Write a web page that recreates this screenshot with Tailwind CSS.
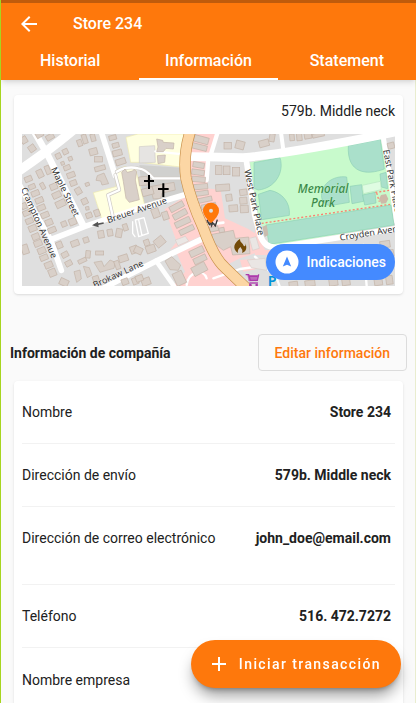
<!DOCTYPE html>
<html lang="es">
<head>
    <meta charset="UTF-8">
    <meta name="viewport" content="width=device-width, initial-scale=1.0">
    <title>Store 234</title>
    <script src="https://cdn.jsdelivr.net/npm/@tailwindcss/browser@4"></script>
</head>
<body class="bg-[#fafafa] font-['Roboto',sans-serif] text-[#212121]">
<div class="flex h-screen flex-col overflow-hidden border-l border-[#a6d51f]">

    <!-- App bar -->
    <header class="relative z-10 border-t-3 border-[#bf5b0c] bg-[#fe780c] text-white shadow-md">
        <div class="flex h-[41px] items-center gap-8 px-4">
            <a href="#" aria-label="Volver" class="block">
                <svg class="size-6" viewBox="0 0 24 24" fill="currentColor"><path d="M20 11H7.830l5.590-5.590L12 4l-8 8 8 8 1.410-1.410L7.830 13H20v-2z"/></svg>
            </a>
            <h1 class="text-base font-medium">Store 234</h1>
        </div>
        <nav class="grid h-9 grid-cols-3 text-center text-base font-medium">
            <a href="#historial" class="border-b-2 border-transparent pt-[5px]">Historial</a>
            <a href="#informacion" aria-current="page" class="border-b-2 border-white pt-[5px]">Información</a>
            <a href="#statement" class="border-b-2 border-transparent pt-[5px]">Statement</a>
        </nav>
    </header>

    <main class="flex-1 overflow-y-auto border-r border-[#e9edcf] [scrollbar-width:none]">

        <!-- Address and map -->
        <section class="mr-3 ml-[13px] mt-[15px] rounded bg-white px-2 pt-1.5 pb-2 shadow-sm">
            <p class="pb-[13px] text-right text-sm">579b. Middle neck</p>
            <div class="relative">
                <svg class="block w-full" viewBox="36 27 1119 456" preserveAspectRatio="xMidYMid slice" role="img" aria-label="Mapa">
                    <rect x="36" y="27" width="1119" height="456" fill="#dfdfdf"/>

                    <!-- Churchyard -->
                    <path d="M388 120L515 128L524 205L400 243Z" fill="#d0d0ce"/>

                    <!-- School grounds -->
                    <g fill="#ffffe0" stroke="#f0ecb0" stroke-width="2">
                        <path d="M348 37L384 27H524L512 126L390 112L362 112Z"/>
                        <path d="M250 203L318 185V135L345 124L376 130L404 240L392 247L275 281Z"/>
                    </g>
                    <path d="M388 65L434 62L436 112L388 114Z" fill="#e6e4e2" stroke="#d0ccc8" stroke-width="2"/>

                    <!-- Shops -->
                    <g fill="#ffd2d0">
                        <path d="M540 27H618L600 110L590 190L632 195L645 280L715 312L735 325V385L690 400L650 420L600 330L555 250L535 160Z"/>
                        <path d="M464 253L528 213L580 330L480 375L500 350Z"/>
                        <path d="M500 385L580 340L650 440L690 483H490L525 440Z"/>
                        <path d="M735 310L765 375H800L790 390H735Z"/>
                        <path d="M690 405L750 400V430L700 440Z"/>
                    </g>

                    <!-- Park -->
                    <path d="M720 112L1112 43L1130 120L1152 300L785 362L745 280Z" fill="#c8facc"/>
                    <g fill="#aae0cb" stroke="#8ed0b5" stroke-width="2">
                        <path d="M732 113L810 98C824 142 795 190 745 195L732 190Z"/>
                        <path d="M745 208L780 196C815 202 842 232 838 271L755 284Z"/>
                        <path d="M1015 62L1111 43L1123 132C1070 152 1010 146 1015 62Z"/>
                        <path d="M935 218C930 180 968 150 1010 156L1018 232L960 242Q938 238 935 218Z"/>
                        <path d="M1020 184L1055 179L1061 229L1026 236Z"/>
                        <path d="M1058 210L1095 202L1098 234L1064 240Z"/>
                        <path d="M1110 147L1128 142L1133 191L1114 186Z"/>
                        <path d="M768 300L1143 240L1152 300L777 358Z"/>
                    </g>
                    <path d="M1057 181L1111 169L1114 194L1060 206Z" fill="#dffce2" stroke="#b5e6c0" stroke-width="2"/>
                    <g fill="none" stroke="#fa8072" stroke-width="4" stroke-dasharray="6 6">
                        <path d="M755 295L1140 238M1096 202L1140 196M1100 204L1108 230"/>
                    </g>

                    <!-- Side streets -->
                    <g fill="none" stroke="#fff" stroke-linejoin="round" stroke-linecap="round">
                        <path stroke-width="28" d="M20 142Q110 82 190 15"/>
                        <path stroke-width="20" d="M70 15L112 88L220 302"/>
                        <path stroke-width="17" d="M20 165L122 345L154 436M120 345L225 304L392 248L540 205"/>
                        <path stroke-width="17" d="M272 15L316 152"/>
                        <path stroke-width="11" stroke="#d0cbc6" d="M316 150L328 195L294 210L308 272M320 140Q350 122 385 130Q408 132 430 160L515 160"/>
                        <path stroke-width="7" d="M316 150L328 195L294 210L308 272M320 140Q350 122 385 130Q408 132 430 160L515 160M436 79L520 88"/>
                        <path stroke-width="26" d="M545 95L700 98Q860 82 1160 20"/>
                        <path stroke-width="13" d="M625 15L602 90M594 110L590 165"/>
                        <path stroke-width="17" d="M708 100L734 270L750 330Q764 372 805 366L1160 311"/>
                        <path stroke-width="12" d="M812 15L820 75"/>
                        <path stroke-width="8" d="M585 300L640 293"/>
                        <path stroke-width="15" d="M1120 38L1140 155L1160 290"/>
                        <path stroke-width="17" d="M270 495L360 448L445 405L580 340"/>
                        <path stroke-width="14" d="M438 407L500 495"/>
                        <path stroke-width="7" d="M735 395L800 460L815 500M1060 360L1070 483M610 460L690 432L740 425M530 480C535 440 580 430 590 460"/>
                        <path stroke-width="4" d="M368 290V325L375 335M376 285L402 278L415 325L386 335ZM386 284L396 332"/>
                    </g>

                    <!-- Buildings, filled in by the script below -->
                    <g id="buildings" fill="#d9d0c9" stroke="#c3b3a7" stroke-width="2">
                        <path d="M335 142L345 132L352 142L368 138L372 133L380 140L376 165L388 224L358 232L348 220L340 170Z"/>
                        <path d="M252 412L275 408L282 425L300 405L316 412L312 430L290 436L270 442Z"/>
                        <path d="M192 440L210 435L214 462L200 472ZM220 424L238 428L246 450L232 458Z"/>
                        <path d="M262 152L282 144L296 176L276 180L272 168L258 166Z"/>
                        <path d="M440 42L458 46L460 52L492 54L490 72L468 70L460 80H440L444 66Z"/>
                        <path d="M442 92L466 90L464 112L444 116Z"/>
                        <path d="M420 185L492 172L496 195L456 204L452 220L430 222Z"/>
                        <path d="M606 328L670 316L676 340L716 336L720 386L668 390L662 365L640 376L606 350Z"/>
                        <path d="M465 408L485 395L512 420L505 436L480 434Z"/>
                    </g>
                    <g fill="#eae6e4" stroke="#d8cfca" stroke-width="2">
                        <path d="M496 345L526 334L536 348L504 362Z"/>
                        <path d="M718 340L738 335L748 370L728 376Z"/>
                        <path d="M712 405L765 400L770 436L724 428Z"/>
                    </g>

                    <!-- Main road -->
                    <g fill="none">
                        <path stroke="#c9914c" stroke-width="34" d="M542 15Q518 90 528 160Q542 225 578 305Q612 400 645 428L720 500"/>
                        <path stroke="#fcd6a4" stroke-width="30" d="M542 15Q518 90 528 160Q542 225 578 305Q612 400 645 428L720 500"/>
                    </g>

                    <!-- Church crosses, arrow, fire station -->
                    <path d="M417 150V192M402 168H432M460 175V216M444 192H476" stroke="#000" stroke-width="6"/>
                    <path d="M281 294L258 299" stroke="#555" stroke-width="5"/><path d="M246 301L264 290L266 307Z" fill="#555"/>
                    <path d="M684 384C664 370 674 352 690 342C690 354 698 352 700 361C704 367 708 363 706 355C714 374 704 382 696 384C700 374 694 373 692 366C685 371 682 377 684 384Z" fill="#734a08"/>
                    <path d="M1113 210L1128 207L1135 222L1128 235L1114 236L1107 222Z" fill="#cdb9a8"/>
                    <path d="M757 305L770 300L775 330L764 336Z" fill="#c9bcae"/>
                    <path d="M707 449H716L721 466H742L746 448M719 454H742" fill="none" stroke="#ac39ac" stroke-width="4"/>
                    <path d="M712 450H746L742 468L716 469Z" fill="#ac39ac" fill-opacity=".7"/>
                    <path d="M718 474H744" stroke="#ac39ac" stroke-width="4"/>
                    <circle cx="721" cy="480" r="4" fill="#ac39ac"/><circle cx="740" cy="480" r="4" fill="#ac39ac"/>

                    <!-- Street names -->
                    <g font-family="Noto Sans, sans-serif" font-size="27" fill="#333" stroke="#fff" stroke-opacity=".7" stroke-width="2" paint-order="stroke">
                        <text transform="translate(122 132) rotate(64)">Maple Street</text>
                        <text transform="translate(32 192) rotate(66)">Crampton Avenue</text>
                        <text transform="translate(295 295) rotate(-19)">Breuer Avenue</text>
                        <text transform="translate(254 490) rotate(-25)">Brokaw Lane</text>
                        <text transform="translate(703 136) rotate(78)">West Park Place</text>
                        <text transform="translate(1119 76) rotate(79)">East Park Place</text>
                        <text transform="translate(991 347) rotate(-9)">Croyden Avenue</text>
                    </g>
                    <g font-family="Noto Sans, sans-serif" font-size="35" font-style="italic" font-weight="500" fill="#3c8a4a" text-anchor="middle" stroke="#c8facc" stroke-opacity=".7" stroke-width="2" paint-order="stroke">
                        <text x="939" y="203">Memorial</text>
                        <text x="939" y="246">Park</text>
                    </g>
                    <text x="773" y="483" font-family="Noto Sans, sans-serif" font-size="43" font-weight="600" fill="#0092da">P</text>

                    <!-- Marker -->
                    <path d="M591 284L598 299L606 291L616 303L622 284" fill="none" stroke="#333" stroke-width="4"/>
                    <path d="M588 290L600 296L604 308L610 296L622 296" fill="#444"/>
                    <path d="M603 233a24 24 0 0 0-24 24c0 17 24 37 24 37s24-20 24-37a24 24 0 0 0-24-24z" fill="#ff780a"/>
                    <circle cx="603" cy="257" r="6" fill="#ddd"/>
                </svg>
                <button type="button" class="absolute right-0 bottom-1.5 flex h-9 items-center gap-2 rounded-full bg-[#448aff] px-[9px] text-sm font-medium text-white">
                    <svg class="size-6" viewBox="0 0 24 24"><circle cx="12" cy="12" r="11.500" fill="#fff"/><path d="M12 6.500L7.800 16.500L12 14.800L16.200 16.500Z" fill="#448aff"/></svg>
                    Indicaciones
                </button>
            </div>
        </section>

        <!-- Company info -->
        <div class="mt-10 flex items-center justify-between pr-2 pl-[9px]">
            <h2 class="text-sm font-bold">Información de compañía</h2>
            <button type="button" class="h-[37px] rounded border border-[#dcdcdc] px-4 text-sm font-medium text-[#fe780c]">Editar información</button>
        </div>

        <dl class="mr-3 ml-[13px] mt-2.5 rounded bg-white px-2 text-sm shadow-sm">
            <div class="flex h-[63px] items-center justify-between border-b border-[#f2f2f2] pr-1">
                <dt>Nombre</dt>
                <dd class="font-bold">Store 234</dd>
            </div>
            <div class="flex h-[63px] items-center justify-between border-b border-[#f2f2f2] pr-1">
                <dt>Dirección de envío</dt>
                <dd class="font-bold">579b. Middle neck</dd>
            </div>
            <div class="flex h-[78px] items-center justify-between border-b border-[#f2f2f2] pr-1 pb-4">
                <dt>Dirección de correo electrónico</dt>
                <dd class="font-bold">john_doe@email.com</dd>
            </div>
            <div class="flex h-[63px] items-center justify-between border-b border-[#f2f2f2] pr-1">
                <dt>Teléfono</dt>
                <dd class="font-bold">516. 472.7272</dd>
            </div>
            <div class="flex h-[63px] items-center justify-between pr-1">
                <dt>Nombre empresa</dt>
                <dd class="font-bold"></dd>
            </div>
        </dl>
    </main>

    <button type="button" class="fixed right-[15px] bottom-[15px] z-20 flex h-12 items-center gap-2 rounded-full bg-[#fe780c] pr-5 pl-4 text-sm font-medium tracking-widest text-white shadow-lg shadow-black/40">
        <svg class="size-6" viewBox="0 0 24 24" fill="currentColor"><path d="M19 13h-6v6h-2v-6H5v-2h6V5h2v6h6v2z"/></svg>
        Iniciar transacción
    </button>
</div>

<script>
    // centre x, centre y, width, height, angle
    const houses = [
        [42, 45, 18, 20, -30], [66, 70, 20, 20, -35], [88, 28, 22, 18, -30], [120, 36, 24, 16, -30],
        [145, 93, 16, 16, -25], [166, 80, 16, 16, -25], [158, 115, 10, 10, -20], [181, 101, 12, 12, -20], [171, 128, 20, 14, -22],
        [183, 150, 24, 16, -20], [190, 174, 20, 16, -20], [205, 198, 18, 20, -30], [224, 229, 18, 18, -25], [232, 250, 10, 10, -10],
        [237, 271, 18, 16, -20], [261, 264, 16, 20, -20], [232, 178, 12, 10, -20],
        [209, 54, 14, 20, -20], [224, 42, 14, 28, -18], [249, 38, 14, 22, -15], [250, 80, 24, 20, -15], [265, 103, 24, 16, 0], [270, 130, 32, 14, -15],
        [308, 38, 22, 14, -15], [317, 61, 20, 14, -15], [322, 84, 28, 18, -15], [332, 110, 30, 18, -18],
        [90, 146, 18, 24, -25], [113, 135, 14, 26, -22], [131, 185, 22, 18, -22], [98, 183, 12, 20, -28], [140, 210, 26, 18, -25], [152, 236, 30, 20, -25],
        [55, 162, 22, 16, -22], [66, 185, 20, 14, -22], [76, 205, 24, 16, -22], [88, 226, 24, 16, -22], [94, 248, 24, 16, -22], [105, 270, 24, 16, -22], [117, 292, 22, 18, -22], [126, 315, 24, 16, -22],
        [42, 243, 16, 18, -22], [50, 264, 22, 16, -22], [58, 288, 22, 16, -22], [68, 310, 24, 18, -22], [77, 335, 22, 18, -22], [84, 355, 24, 18, -22], [95, 377, 24, 18, -22], [102, 398, 24, 16, -22], [116, 420, 24, 18, -22], [127, 443, 22, 22, -22],
        [162, 297, 16, 16, -22], [188, 290, 22, 20, -22], [148, 360, 18, 20, -22], [195, 355, 24, 18, -20], [228, 345, 16, 16, -18],
        [165, 389, 20, 16, -28], [176, 415, 20, 16, -28], [45, 373, 20, 28, -18], [217, 407, 26, 12, -25], [234, 388, 14, 22, 5], [269, 384, 24, 12, 0],
        [273, 328, 18, 22, -10], [300, 323, 16, 20, -10], [327, 324, 18, 26, 10], [346, 307, 14, 20, -18],
        [340, 400, 28, 20, -18], [372, 374, 22, 22, -20], [162, 472, 26, 20, 25], [345, 470, 20, 18, -20], [376, 468, 18, 20, -20],
        [322, 420, 14, 26, -20], [258, 463, 18, 20, -18],
        [400, 168, 26, 26, -5], [413, 200, 34, 22, -15], [437, 264, 22, 28, -20], [466, 272, 18, 24, -18], [410, 353, 16, 18, -20],
        [385, 376, 24, 20, 25], [422, 372, 28, 22, -20], [449, 350, 30, 26, -40], [408, 470, 26, 22, -20], [388, 460, 22, 18, -20],
        [500, 245, 44, 18, -28], [510, 268, 44, 18, -28], [518, 292, 48, 18, -25], [530, 315, 46, 16, -25], [560, 380, 44, 20, -25], [570, 403, 40, 18, -25], [568, 432, 44, 28, -28],
        [508, 460, 30, 40, -25],
        [574, 44, 44, 20, 15], [568, 66, 46, 16, 14], [566, 120, 34, 16, 10], [564, 142, 38, 16, 8], [566, 163, 40, 16, 5], [572, 185, 42, 16, -5], [574, 205, 42, 14, -8], [580, 225, 52, 14, -12], [596, 243, 44, 14, -12],
        [612, 312, 26, 14, -12], [635, 315, 16, 14, -10],
        [653, 62, 22, 20, 0], [690, 60, 26, 24, 15], [626, 135, 20, 26, 0], [650, 136, 20, 26, 0], [678, 140, 22, 26, 0], [638, 188, 42, 20, -4],
        [657, 218, 18, 20, -8], [700, 202, 22, 18, -8], [700, 227, 22, 20, -5], [670, 250, 26, 20, -5], [703, 252, 24, 22, -3],
        [762, 55, 30, 20, -15], [846, 37, 14, 20, -5], [868, 36, 16, 22, -5], [894, 32, 22, 18, -10], [925, 30, 36, 12, -12], [786, 38, 16, 24, 10],
        [1143, 62, 20, 18, -15], [1125, 358, 30, 20, -8], [1090, 378, 20, 24, -8], [1140, 385, 22, 20, -8],
        [970, 470, 26, 24, -8], [1008, 470, 24, 22, -8], [1105, 470, 24, 22, -8], [1138, 465, 20, 26, -8], [900, 475, 30, 18, -8], [850, 478, 26, 16, -8],
        [1020, 378, 24, 18, -8], [975, 386, 30, 18, -8]
    ];

    const group = document.getElementById("buildings");
    houses.forEach(([cx, cy, w, h, angle]) => {
        const rect = document.createElementNS("http://www.w3.org/2000/svg", "rect");
        rect.setAttribute("x", cx - w / 2);
        rect.setAttribute("y", cy - h / 2);
        rect.setAttribute("width", w);
        rect.setAttribute("height", h);
        rect.setAttribute("transform", `rotate(${angle} ${cx} ${cy})`);
        group.appendChild(rect);
    });
</script>
</body>
</html>
